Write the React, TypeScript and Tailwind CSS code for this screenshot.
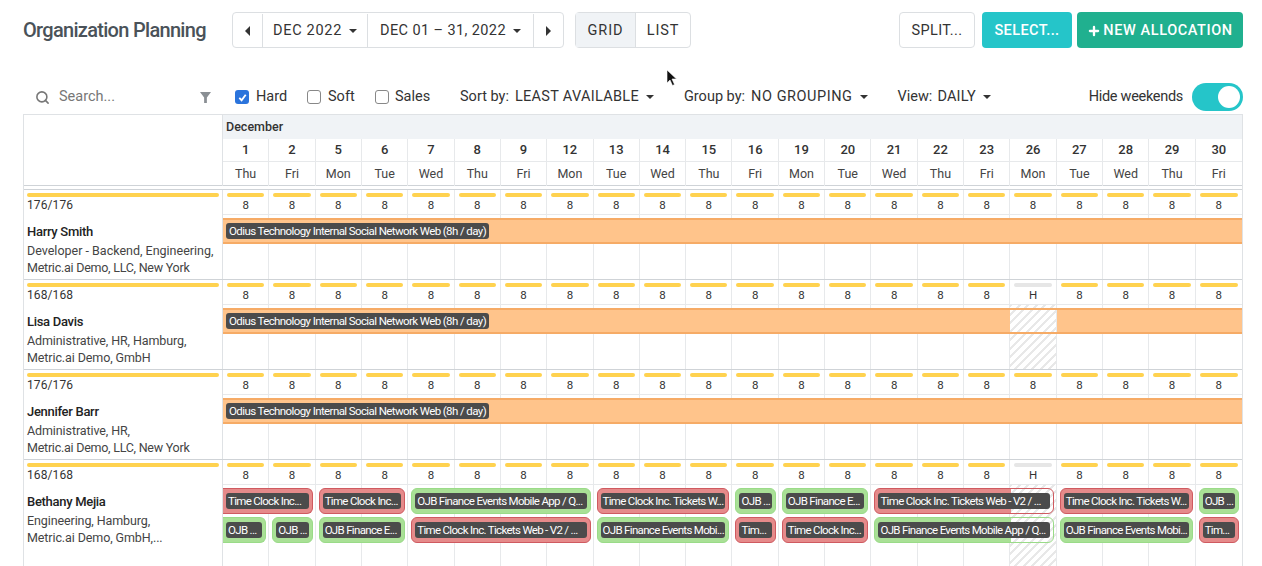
import React from "react";
import { Search, Plus } from "lucide-react";

const days: [string, string][] = [
  ["1", "Thu"], ["2", "Fri"], ["5", "Mon"], ["6", "Tue"], ["7", "Wed"], ["8", "Thu"], ["9", "Fri"], ["12", "Mon"],
  ["13", "Tue"], ["14", "Wed"], ["15", "Thu"], ["16", "Fri"], ["19", "Mon"], ["20", "Tue"], ["21", "Wed"], ["22", "Thu"],
  ["23", "Fri"], ["26", "Mon"], ["27", "Tue"], ["28", "Wed"], ["29", "Thu"], ["30", "Fri"],
];

const GRID = "grid grid-cols-[199px_repeat(22,minmax(0,1fr))]";
const HATCH = "bg-[repeating-linear-gradient(135deg,#e8e8e8_0,#e8e8e8_2px,#ffffff_2px,#ffffff_6px)]";

function Caret() {
  return <span className="ml-[7px] inline-block h-0 w-0 shrink-0 border-x-[4px] border-t-[4px] border-x-transparent border-t-[#333]" />;
}

function Check({ checked }: { checked?: boolean }) {
  return checked ? (
    <span className="flex h-[14px] w-[14px] shrink-0 items-center justify-center rounded-[3px] bg-[#2b74dc]">
      <svg viewBox="0 0 12 12" className="h-[11px] w-[11px]" fill="none" stroke="#fff" strokeWidth="2">
        <path d="M2.5 6.5 5 9l4.5-6" />
      </svg>
    </span>
  ) : (
    <span className="block h-[14px] w-[14px] shrink-0 rounded-[3px] border border-[#888] bg-white" />
  );
}

function Label({ text, full }: { text: string; full?: boolean }) {
  return (
    <span className={`${full ? "w-full px-[2px] tracking-[-0.68px]" : "px-[3px] tracking-[-0.6px]"} block overflow-hidden whitespace-nowrap rounded-[3px] bg-[#4b4b4b] text-[11.5px] leading-[16px] text-white`}>
      {text}
    </span>
  );
}

type Bar = { c: string; t: string; k: "r" | "g"; flat?: boolean; hole?: boolean };

function AllocBar({ c, t, k, flat, hole }: Bar) {
  const color = k === "r" ? "border-[#cf5a60]" : "border-[#9adb88]";
  const bg = hole
    ? k === "r"
      ? "bg-[linear-gradient(to_right,#e58a8a_136px,transparent_136px)]"
      : "bg-[linear-gradient(to_right,#a9e096_136px,transparent_136px)]"
    : k === "r"
      ? "bg-[#e58a8a]"
      : "bg-[#a9e096]";
  const shape = flat ? "rounded-r-[6px] border-l-0 ml-0" : "rounded-[6px] ml-[3px]";
  return (
    <div className={`${c} ${color} ${bg} ${shape} mr-[3px] flex h-[26px] min-w-0 items-center border-[1.5px] px-[3px]`}>
      <Label text={t} full />
    </div>
  );
}

type RowProps = { total: string; name: string; l1: string; l2: string; l1c?: string; l2c?: string; holiday?: boolean; last?: boolean; children: React.ReactNode };

function Row({ total, name, l1, l2, l1c = "tracking-[-0.1px]", l2c = "tracking-[-0.1px]", holiday, last, children }: RowProps) {
  return (
    <div className={`${GRID} ${last ? "h-[107px] grid-rows-[25px_81px]" : "h-[90px] grid-rows-[25px_64px]"} border-t border-[#cfd3d7]`}>
      <div className="col-start-1 row-span-2 row-start-1 border-r border-[#dfe2e5] px-[3px] pt-[3px]">
        <div className="h-[4px] rounded-full bg-[#ffd24f]" />
        <div className="mt-[1px] text-[12px] leading-[15px] tracking-[0.1px] text-[#333]">{total}</div>
        <div className="mt-[10px] text-[13px] font-medium leading-[18px] tracking-[-0.3px] text-[#222]">{name}</div>
        <div className={`mt-[1px] whitespace-nowrap text-[12.5px] leading-[17px] text-[#444] ${l1c}`}>{l1}</div>
        <div className={`whitespace-nowrap text-[12.5px] leading-[17px] text-[#444] ${l2c}`}>{l2}</div>
      </div>
      {days.map(([d], i) => {
        const h = holiday && d === "26";
        return (
          <div key={d} className={`row-start-1 flex flex-col border-b border-[#e7e9eb] px-[4px] pt-[3px] ${i < 21 ? "border-r border-r-[#e7e9eb]" : ""}`} style={{ gridColumnStart: i + 2 }}>
            <div className={`h-[4px] rounded-full ${h ? "bg-[#e6e6e6]" : "bg-[#ffd24f]"}`} />
            <div className="mt-[1px] text-center text-[11.5px] leading-[15px] text-[#333]">{h ? "H" : "8"}</div>
          </div>
        );
      })}
      {days.map(([d], i) => (
        <div
          key={d}
          className={`row-start-2 ${i < 21 ? "border-r border-[#e7e9eb]" : ""} ${holiday && d === "26" ? HATCH : ""}`}
          style={{ gridColumnStart: i + 2 }}
        />
      ))}
      <div className="z-10 col-start-2 col-end-24 row-start-2 grid grid-cols-[repeat(22,minmax(0,1fr))] content-start gap-y-[3px] pt-[3px]">
        {children}
      </div>
    </div>
  );
}

const ODIUS = "Odius Technology Internal Social Network Web (8h / day)";

function OrangeBar() {
  return (
    <div className="col-start-1 col-end-23 flex h-[26px] items-center border-y-2 border-[#f6ab66] bg-[#ffc48b] px-[3px]">
      <Label text={ODIUS} />
    </div>
  );
}

export default function App() {
  return (
    <div className="h-[566px] w-[1262px] overflow-hidden bg-white font-['Roboto',sans-serif] text-[#333]">
      <div className="relative flex h-[60px] items-center pl-[23px] pr-[19px]">
        <h1 className="w-[209px] text-[20px] font-medium leading-none tracking-[-0.7px] text-[#4a5259]">Organization Planning</h1>
        <div className="flex h-[36px] w-[332px] items-stretch rounded-[4px] border border-[#dcdfe2] pt-[1px] text-[14.5px] tracking-[0.7px]">
          <div className="flex w-[30px] items-center justify-center border-r border-[#dcdfe2]">
            <span className="h-0 w-0 border-y-[5px] border-r-[5px] border-y-transparent border-r-[#333]" />
          </div>
          <div className="flex w-[105px] items-center justify-center border-r border-[#dcdfe2]">DEC 2022<Caret /></div>
          <div className="flex w-[166px] items-center justify-center border-r border-[#dcdfe2] tracking-[0.4px]">DEC 01 – 31, 2022<Caret /></div>
          <div className="flex flex-1 items-center justify-center">
            <span className="h-0 w-0 border-y-[5px] border-l-[5px] border-y-transparent border-l-[#333]" />
          </div>
        </div>
        <div className="ml-[11px] flex h-[36px] w-[116px] rounded-[4px] border border-[#dcdfe2] text-[14.5px] tracking-[0.9px]">
          <div className="flex w-[60px] items-center justify-center border-r border-[#dcdfe2] bg-[#f0f3f6] pt-[1px]">GRID</div>
          <div className="flex flex-1 items-center justify-center pt-[1px]">LIST</div>
        </div>
        <div className="ml-auto flex items-center">
          <div className="flex h-[36px] w-[76px] items-center justify-center rounded-[4px] border border-[#dcdfe2] pt-[1px] text-[14.5px] tracking-[0.4px]">SPLIT...</div>
          <div className="ml-[7px] flex h-[36px] w-[90px] items-center justify-center rounded-[4px] bg-[#25c5c9] pt-[1px] text-[14.5px] font-medium tracking-[0.4px] text-white">SELECT...</div>
          <div className="ml-[5px] flex h-[36px] w-[166px] items-center justify-center rounded-[4px] bg-[#20b08f] pt-[1px] text-[14.5px] font-medium tracking-[0.6px] text-white">
            <Plus size={14} strokeWidth={4} className="mr-[2px]" />NEW ALLOCATION
          </div>
        </div>
        <svg viewBox="0 0 12 18" className="absolute left-[666px] top-[69px] h-[18px] w-[12px]">
          <path d="M1 1v13l3-3 2.5 5.5 2-1L6 10h4.5z" fill="#111" stroke="#fff" strokeWidth="0.6" />
        </svg>
      </div>

      <div className="flex h-[54px] items-end pb-[4px] pl-[23px] pr-[19px] text-[14.5px]">
        <div className="flex h-[26px] w-full items-center">
          <Search size={15} strokeWidth={2.5} className="ml-[12px] shrink-0 text-[#777]" />
          <span className="ml-[9px] w-[141px] shrink-0 text-[#777]">Search...</span>
          <svg viewBox="0 0 12 12" className="h-[11px] w-[11px] shrink-0">
            <path d="M0 0h12L7.5 6v6h-3V6z" fill="#8a8f94" />
          </svg>
          <span className="ml-[24px]"><Check checked /></span>
          <span className="ml-[7px] w-[37px]">Hard</span>
          <span className="ml-[14px]"><Check /></span>
          <span className="ml-[7px] w-[34px]">Soft</span>
          <span className="ml-[13px]"><Check /></span>
          <span className="ml-[6px] w-[44px]">Sales</span>
          <span className="ml-[21px]">Sort by:</span>
          <span className="ml-[6px] tracking-[0.3px]">LEAST AVAILABLE</span><Caret />
          <span className="ml-[30px]">Group by:</span>
          <span className="ml-[6px] tracking-[0.55px]">NO GROUPING</span><Caret />
          <span className="ml-[30px]">View:</span>
          <span className="ml-[5px] tracking-[0.2px]">DAILY</span><Caret />
          <span className="ml-auto tracking-[-0.3px]">Hide weekends</span>
          <span className="ml-[9px] flex h-[28px] w-[51px] items-center justify-end rounded-full bg-[#25c5c9] pr-[3px]">
            <span className="h-[22px] w-[22px] rounded-full bg-white" />
          </span>
        </div>
      </div>

      <div className="ml-[23px] w-[1220px] border-x border-t border-[#dfe2e5]">
        <div className={`${GRID} h-[71px] grid-rows-[24px_23px_24px] border-b border-[#cfd3d7]`}>
          <div className="col-start-1 row-span-3 row-start-1 border-r border-[#dfe2e5]" />
          <div className="col-start-2 col-end-24 row-start-1 flex items-center bg-[#f0f3f6] px-[3px] text-[12.5px] font-medium text-[#333]">December</div>
          {days.map(([d], i) => (
            <div key={d} className={`row-start-2 flex items-center justify-center border-b border-[#e7e9eb] text-[13px] font-medium text-[#333] ${i < 21 ? "border-r border-r-[#e7e9eb]" : ""}`} style={{ gridColumnStart: i + 2 }}>
              {d}
            </div>
          ))}
          {days.map(([d, w], i) => (
            <div key={d} className={`row-start-3 flex items-center justify-center text-[12.5px] text-[#444] ${i < 21 ? "border-r border-[#e7e9eb]" : ""}`} style={{ gridColumnStart: i + 2 }}>
              {w}
            </div>
          ))}
        </div>
        <div className="h-[3px]" />
        <Row total="176/176" name="Harry Smith" l1="Developer - Backend, Engineering," l2="Metric.ai Demo, LLC, New York" l1c="tracking-[0px]" l2c="tracking-[-0.25px]">
          <OrangeBar />
        </Row>
        <Row total="168/168" name="Lisa Davis" l1="Administrative, HR, Hamburg," l2="Metric.ai Demo, GmbH" holiday>
          <div className="col-start-1 col-end-18 flex h-[26px] items-center border-y-2 border-[#f6ab66] bg-[#ffc48b] px-[3px]">
            <Label text={ODIUS} />
          </div>
          <div className="col-start-18 col-end-19 h-[26px] border-y-2 border-[#f6ab66]" />
          <div className="col-start-19 col-end-23 h-[26px] border-y-2 border-[#f6ab66] bg-[#ffc48b]" />
        </Row>
        <Row total="176/176" name="Jennifer Barr" l1="Administrative, HR," l2="Metric.ai Demo, LLC, New York" l2c="tracking-[-0.25px]">
          <OrangeBar />
        </Row>
        <Row total="168/168" name="Bethany Mejia" l1="Engineering, Hamburg," l2="Metric.ai Demo, GmbH,..." holiday last>
          <AllocBar c="col-start-1 col-end-3" t="Time Clock Inc..." k="r" flat />
          <AllocBar c="col-start-3 col-end-5" t="Time Clock Inc..." k="r" />
          <AllocBar c="col-start-5 col-end-9" t="OJB Finance Events Mobile App / Q..." k="g" />
          <AllocBar c="col-start-9 col-end-12" t="Time Clock Inc. Tickets W..." k="r" />
          <AllocBar c="col-start-12 col-end-13" t="OJB ..." k="g" />
          <AllocBar c="col-start-13 col-end-15" t="OJB Finance E..." k="g" />
          <AllocBar c="col-start-15 col-end-19" t="Time Clock Inc. Tickets Web - V2 / ..." k="r" hole />
          <AllocBar c="col-start-19 col-end-22" t="Time Clock Inc. Tickets W..." k="r" />
          <AllocBar c="col-start-22 col-end-23" t="OJB ..." k="g" />
          <AllocBar c="col-start-1 col-end-2" t="OJB ..." k="g" flat />
          <AllocBar c="col-start-2 col-end-3" t="OJB ..." k="g" />
          <AllocBar c="col-start-3 col-end-5" t="OJB Finance E..." k="g" />
          <AllocBar c="col-start-5 col-end-9" t="Time Clock Inc. Tickets Web - V2 / ..." k="r" />
          <AllocBar c="col-start-9 col-end-12" t="OJB Finance Events Mobi..." k="g" />
          <AllocBar c="col-start-12 col-end-13" t="Tim..." k="r" />
          <AllocBar c="col-start-13 col-end-15" t="Time Clock Inc..." k="r" />
          <AllocBar c="col-start-15 col-end-19" t="OJB Finance Events Mobile App / Q..." k="g" hole />
          <AllocBar c="col-start-19 col-end-22" t="OJB Finance Events Mobi..." k="g" />
          <AllocBar c="col-start-22 col-end-23" t="Tim..." k="r" />
        </Row>
      </div>
    </div>
  );
}
